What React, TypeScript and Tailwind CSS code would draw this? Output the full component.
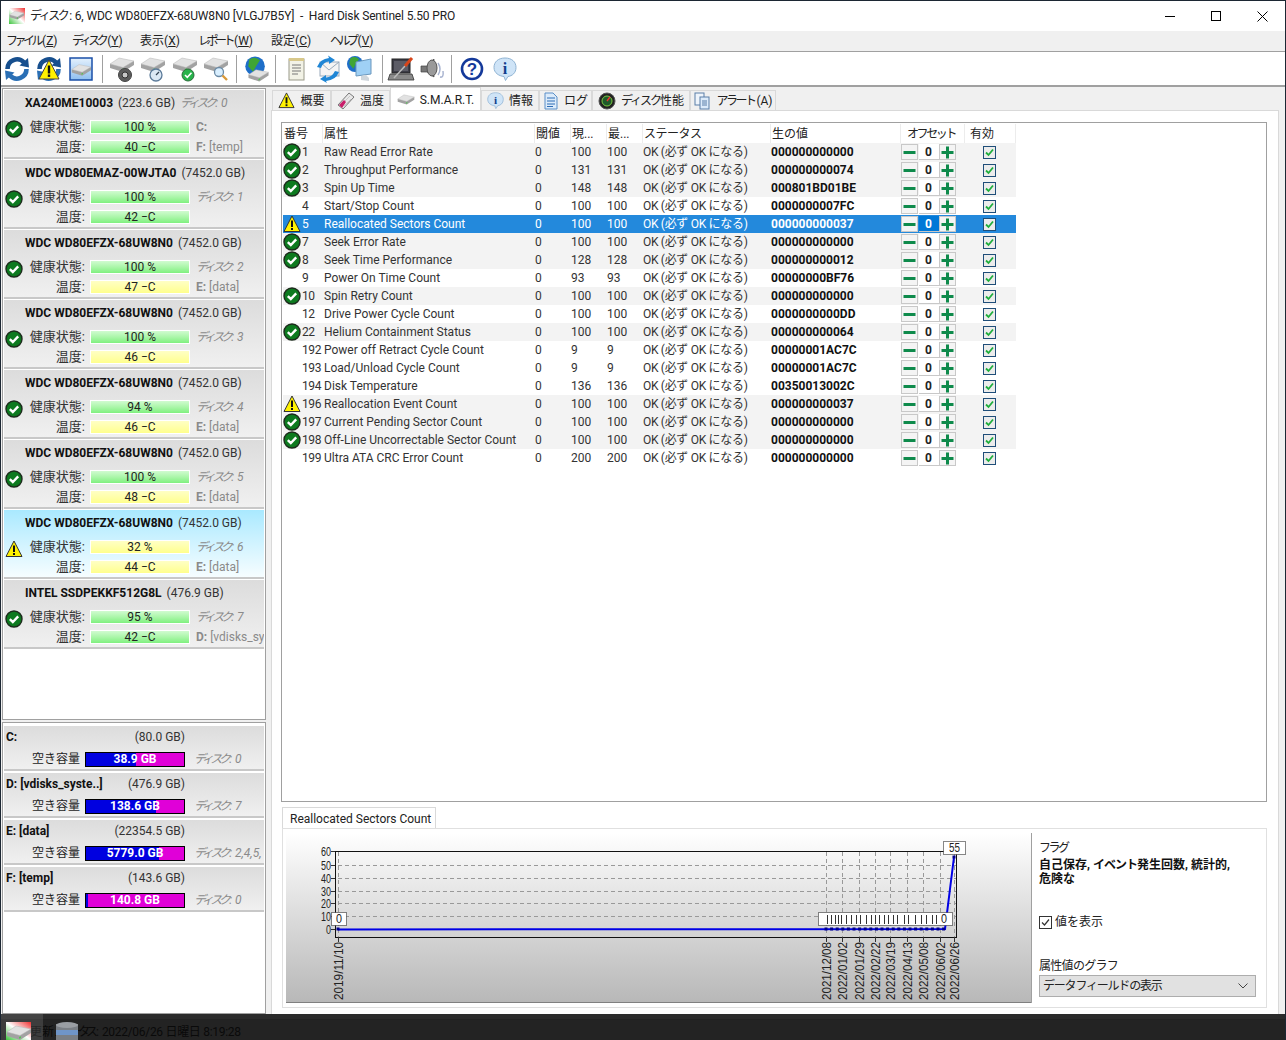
import React from 'react';

const FONT = 'Roboto, "Noto Sans CJK JP", sans-serif';

// --- small icons ---
function CheckIcon({ size = 18 }: { size?: number }) {
  return (
    <svg width={size} height={size} viewBox="0 0 18 18" className="shrink-0">
      <circle cx="9" cy="9" r="8" fill="#0d7a1f" stroke="#1c2b1c" strokeWidth="1.4" />
      <path d="M4.8 9.2 L7.8 12 L13.2 6.4" fill="none" stroke="#fff" strokeWidth="2.4" />
    </svg>
  );
}

function WarnIcon({ size = 18 }: { size?: number }) {
  return (
    <svg width={size} height={size} viewBox="0 0 18 18" className="shrink-0">
      <path d="M9 1 L17 16.5 L1 16.5 Z" fill="#fff200" stroke="#333" strokeWidth="1" strokeLinejoin="round" />
      <rect x="8" y="5.5" width="2" height="6.5" fill="#111" />
      <rect x="8" y="13" width="2" height="2" fill="#111" />
    </svg>
  );
}

function Disk({ x = 0, y = 0, s = 1 }: { x?: number; y?: number; s?: number }) {
  return (
    <g transform={`translate(${x} ${y}) scale(${s})`}>
      <path d="M1 8 L1 12 L14 16 L25 9 L25 5 Z" fill="#a2a2a2" />
      <path d="M1 8 L10 2 L25 5 L14 11.5 Z" fill="#e2e2e2" stroke="#b4b4b4" strokeWidth="0.5" />
      <path d="M13 13 L15 12.2 L15 14 L13 14.8 Z" fill="#55c455" />
    </g>
  );
}

function Refresh({ warn }: { warn?: boolean }) {
  return (
    <svg width="26" height="26" viewBox="0 0 26 26">
      <path d="M3.5 13 A9.5 9.5 0 0 1 20 6.5" fill="none" stroke="#174f8e" strokeWidth="4.6" />
      <path d="M22.5 13 A9.5 9.5 0 0 1 6 19.5" fill="none" stroke="#2a6fb5" strokeWidth="4.6" />
      <path d="M15.5 9.5 L25 11.5 L24 2 Z" fill="#174f8e" />
      <path d="M10.5 16.5 L1 14.5 L2 24 Z" fill="#2a6fb5" />
      {warn && (
        <g>
          <path d="M13 4 L23 23 L3 23 Z" fill="#fff200" stroke="#444" strokeWidth="1" />
          <rect x="11.8" y="9.5" width="2.4" height="8" fill="#111" />
          <rect x="11.8" y="18.5" width="2.4" height="2.4" fill="#111" />
        </g>
      )}
    </svg>
  );
}

function DiskBox() {
  return (
    <svg width="24" height="26" viewBox="0 0 24 26">
      <defs>
        <linearGradient id="dbox" x1="0" y1="0" x2="0" y2="1">
          <stop offset="0" stopColor="#e4f1fd" />
          <stop offset="1" stopColor="#8fbff0" />
        </linearGradient>
      </defs>
      <rect x="1" y="2" width="22" height="22" fill="url(#dbox)" stroke="#1a4fa8" strokeWidth="1.5" />
      <Disk x={2} y={7} s={0.8} />
    </svg>
  );
}

function DiskTool({ kind }: { kind: 'cd' | 'gauge' | 'ok' | 'search' }) {
  return (
    <svg width="28" height="28" viewBox="0 0 28 28">
      <Disk x={1} y={1} />
      {kind === 'cd' && (
        <g>
          <circle cx="17" cy="20" r="6.5" fill="#5c5c5c" stroke="#444" />
          <circle cx="17" cy="20" r="3" fill="#c8c8c8" stroke="#333" />
        </g>
      )}
      {kind === 'gauge' && (
        <g>
          <circle cx="17" cy="20" r="6" fill="#dbe8f5" stroke="#5b7a99" strokeWidth="1.3" />
          <path d="M17 20 L20 17" stroke="#345" strokeWidth="1.2" />
        </g>
      )}
      {kind === 'ok' && (
        <g>
          <circle cx="17" cy="20" r="6" fill="#27b34a" stroke="#2b6b3a" />
          <path d="M14 20 L16.3 22.3 L20.5 17.8" fill="none" stroke="#fff" strokeWidth="1.6" />
        </g>
      )}
      {kind === 'search' && (
        <g>
          <circle cx="17" cy="17" r="4.5" fill="#d9efff" stroke="#6b8aa5" strokeWidth="1.3" />
          <path d="M20.5 20.5 L25 25" stroke="#d99a3a" strokeWidth="2.4" />
        </g>
      )}
    </svg>
  );
}

function Globe({ cx = 12, cy = 12, r = 10 }: { cx?: number; cy?: number; r?: number }) {
  return (
    <g>
      <circle cx={cx} cy={cy} r={r} fill="#1e6ec8" />
      <path
        d={`M${cx - r * 0.6} ${cy - r * 0.7} Q${cx} ${cy - r * 1.1} ${cx + r * 0.5} ${cy - r * 0.6} L${cx + r * 0.1} ${cy} L${cx - r * 0.2} ${cy + r * 0.6} L${cx - r * 0.7} ${cy} Z`}
        fill="#3fa535"
      />
    </g>
  );
}

function GlobeDisk() {
  return (
    <svg width="28" height="28" viewBox="0 0 28 28">
      <Globe cx={13} cy={11} r={10.5} />
      <Disk x={5} y={13} s={0.9} />
    </svg>
  );
}

function NoteIcon() {
  return (
    <svg width="22" height="26" viewBox="0 0 22 26">
      <rect x="3" y="3" width="15" height="21" fill="#f2f2e6" stroke="#9a9a8a" />
      <rect x="3" y="2" width="15" height="3" fill="#d8c88a" />
      <path d="M6 9 H15 M6 12 H15 M6 15 H15 M6 18 H12" stroke="#777" strokeWidth="1" />
    </svg>
  );
}

function MailIcon() {
  return (
    <svg width="28" height="28" viewBox="0 0 28 28">
      <rect x="6" y="7" width="19" height="14" fill="#f4f4f4" stroke="#9ab" />
      <path d="M6 7 L15 15 L25 7" fill="none" stroke="#9ab" />
      <path d="M3 12 Q6 4 15 3 L14 0.5 L21 5 L15 9 L15 6.5 Q9 7 7 13 Z" fill="#1f86d6" />
      <path d="M25 17 Q22 25 12 26 L13 28 L6 24 L12 20 L12 22.5 Q18 22 21 16 Z" fill="#1f86d6" />
    </svg>
  );
}

function GlobeMonitor() {
  return (
    <svg width="28" height="28" viewBox="0 0 28 28">
      <Globe cx={9} cy={9} r={8} />
      <path d="M10 7 L25 4 L25 19 L10 21 Z" fill="#9fd0f5" stroke="#6a97bd" />
      <path d="M15 21 L15 25 L23 26 L23 23 L20 20 Z" fill="#cfd6dc" />
    </svg>
  );
}

function LaptopTool() {
  return (
    <svg width="30" height="28" viewBox="0 0 30 28">
      <rect x="5" y="4" width="18" height="14" fill="#3c3c46" stroke="#222" />
      <rect x="7" y="6" width="14" height="10" fill="#5c5c66" />
      <path d="M3 19 H25 L27 25 H1 Z" fill="#8a8a8a" stroke="#333" strokeWidth="0.8" />
      <path d="M7 23 L18 11" stroke="#bbb" strokeWidth="1.5" />
      <path d="M18 11 L25 3" stroke="#d8451a" strokeWidth="3" />
    </svg>
  );
}

function Speaker() {
  return (
    <svg width="26" height="26" viewBox="0 0 26 26">
      <path d="M2 10 L8 10 L15 3 L15 21 L8 16 L2 16 Z" fill="#777" stroke="#444" strokeWidth="0.7" />
      <ellipse cx="13" cy="12" rx="5" ry="8" fill="#9a9a9a" stroke="#555" />
      <path d="M19 7 Q23 13 19 19 M21 21 Q25 22 24 15" fill="none" stroke="#a9b4d0" strokeWidth="1.5" />
    </svg>
  );
}

function HelpIcon() {
  return (
    <svg width="24" height="24" viewBox="0 0 24 24">
      <circle cx="12" cy="12" r="10" fill="#fff" stroke="#14399a" strokeWidth="2.6" />
      <text x="12" y="18" textAnchor="middle" fontSize="17" fontWeight="700" fill="#14399a" fontFamily="Liberation Sans">?</text>
    </svg>
  );
}

function InfoBubble({ size = 24 }: { size?: number }) {
  return (
    <svg width={size} height={size} viewBox="0 0 24 24" className="shrink-0">
      <path d="M12 1 C19 1 23 5 23 10.5 C23 16 19 19 15 19.5 L12.5 23.5 L11 19.5 C6 19 1 16 1 10.5 C1 5 5 1 12 1 Z" fill="#cfe4f7" stroke="#8fb3d3" />
      <text x="12" y="17" textAnchor="middle" fontSize="16" fontWeight="700" fill="#12408c" fontFamily="Liberation Serif">i</text>
    </svg>
  );
}

function ThermoIcon() {
  return (
    <svg width="18" height="18" viewBox="0 0 18 18" className="shrink-0">
      <path d="M12 1 L17 5 L6 17 L1 13 Z" fill="#e8e8e8" stroke="#777" />
      <path d="M4 13 L13 4 M7 14 L14 7" stroke="#c8c8c8" />
      <path d="M2 13 L7 8 L9 10 L5 16 Z" fill="#c81e6a" />
    </svg>
  );
}

function DocIcon() {
  return (
    <svg width="16" height="18" viewBox="0 0 16 18" className="shrink-0">
      <path d="M2 1 H10 L14 5 V17 H2 Z" fill="#dcebfa" stroke="#5a8fc8" />
      <path d="M4 6 H12 M4 9 H12 M4 12 H12 M4 14.5 H10" stroke="#2d6cb5" />
    </svg>
  );
}

function GaugeIcon() {
  return (
    <svg width="18" height="18" viewBox="0 0 18 18" className="shrink-0">
      <circle cx="9" cy="9" r="8" fill="#222" stroke="#555" />
      <circle cx="9" cy="9" r="5" fill="#1f5a2a" stroke="#7ac943" />
      <path d="M9 9 L12 5" stroke="#e33" strokeWidth="1.4" />
    </svg>
  );
}

function CopyIcon() {
  return (
    <svg width="18" height="18" viewBox="0 0 18 18" className="shrink-0">
      <rect x="2" y="1" width="9" height="12" fill="#eef4fb" stroke="#5a7fa8" />
      <rect x="7" y="5" width="9" height="12" fill="#dcebfa" stroke="#5a7fa8" />
      <path d="M9 9 H14 M9 11 H14 M9 13 H14" stroke="#5a7fa8" />
    </svg>
  );
}

function SmallDisk() {
  return (
    <svg width="18" height="12" viewBox="0 0 26 16" className="shrink-0">
      <Disk />
    </svg>
  );
}

function AppIcon() {
  return (
    <svg width="16" height="16" viewBox="0 0 16 16" className="shrink-0">
      <defs>
        <linearGradient id="appbg" x1="0" y1="1" x2="1" y2="0">
          <stop offset="0" stopColor="#3ec43e" />
          <stop offset="0.5" stopColor="#ffffff" />
          <stop offset="1" stopColor="#f03030" />
        </linearGradient>
      </defs>
      <rect width="16" height="16" fill="url(#appbg)" />
      <g transform="translate(0 2) scale(0.6)">
        <Disk />
      </g>
    </svg>
  );
}

// katakana in the reference font runs much narrower than in the CJK fallback
function Kana({ children }: { children: React.ReactNode }) {
  return <span className="tracking-[-3.5px] pr-[2px]">{children}</span>;
}

// --- left column ---
type DiskInfo = {
  name: string;
  size: string;
  no: number;
  health: number;
  temp: number;
  tempWarn: boolean;
  vols: string[];
  warn?: boolean;
};

const disks: DiskInfo[] = [
  { name: 'XA240ME10003', size: '(223.6 GB)', no: 0, health: 100, temp: 40, tempWarn: false, vols: ['C:', 'F:|[temp]'] },
  { name: 'WDC WD80EMAZ-00WJTA0', size: '(7452.0 GB)', no: 1, health: 100, temp: 42, tempWarn: false, vols: [] },
  { name: 'WDC WD80EFZX-68UW8N0', size: '(7452.0 GB)', no: 2, health: 100, temp: 47, tempWarn: true, vols: ['E:|[data]'] },
  { name: 'WDC WD80EFZX-68UW8N0', size: '(7452.0 GB)', no: 3, health: 100, temp: 46, tempWarn: true, vols: [] },
  { name: 'WDC WD80EFZX-68UW8N0', size: '(7452.0 GB)', no: 4, health: 94, temp: 46, tempWarn: true, vols: ['E:|[data]'] },
  { name: 'WDC WD80EFZX-68UW8N0', size: '(7452.0 GB)', no: 5, health: 100, temp: 48, tempWarn: true, vols: ['E:|[data]'] },
  { name: 'WDC WD80EFZX-68UW8N0', size: '(7452.0 GB)', no: 6, health: 32, temp: 44, tempWarn: true, vols: ['E:|[data]'], warn: true },
  { name: 'INTEL SSDPEKKF512G8L', size: '(476.9 GB)', no: 7, health: 95, temp: 42, tempWarn: false, vols: ['D:|[vdisks_sy'] },
];

function Bar({ text, warn }: { text: string; warn: boolean }) {
  return (
    <div
      className={`w-[100px] h-[14px] shrink-0 border border-white flex items-center justify-center text-[12px] leading-none text-[#222] bg-gradient-to-b ${
        warn ? 'from-[#ffffc4] to-[#ffff8c]' : 'from-[#d0fbd0] to-[#7ff07f]'
      }`}
    >
      {text}
    </div>
  );
}

function VolLabel({ v }: { v: string }) {
  const [a, b] = v.split('|');
  return (
    <span className="text-[#8a8a8a] whitespace-nowrap">
      <b>{a}</b>
      {b ? ` ${b}` : ''}
    </span>
  );
}

function DiskNo({ children }: { children: React.ReactNode }) {
  return (
    <span className="italic text-[#8a8a8a] whitespace-nowrap">
      <Kana>ディスク</Kana>: {children}
    </span>
  );
}

function DiskCard({ d }: { d: DiskInfo }) {
  const first = d.no === 0;
  return (
    <div
      className={`h-[69px] mb-px shrink-0 overflow-hidden border-b-2 border-[#c8c8c8] bg-gradient-to-b ${
        d.warn ? 'from-[#a9e9ff] to-[#f6fdff]' : 'from-[#dcdcdc] to-[#f0f0f0]'
      }`}
    >
      <div className="h-[24px] pt-px pl-[21px] flex items-center gap-[5px] whitespace-nowrap">
        <span className="font-bold text-[#111]">{d.name}</span>
        <span className="text-[#333]">{d.size}</span>
        {first && <DiskNo>0</DiskNo>}
      </div>
      <div className="flex">
        <div className="w-[22px] pl-px pt-[6px] shrink-0">{d.warn ? <WarnIcon /> : <CheckIcon />}</div>
        <div className="flex-1 min-w-0 flex flex-col gap-[6px] pt-[6px]">
          <div className="flex items-center h-[14px]">
            <span className="w-[59px] text-right text-[#333] text-[13px] shrink-0 whitespace-nowrap">健康状態:</span>
            <div className="w-[5px] shrink-0" />
            <Bar text={`${d.health} %`} warn={!!d.warn} />
            <span className="ml-[6px]">{first ? <VolLabel v="C:" /> : <DiskNo>{d.no}</DiskNo>}</span>
          </div>
          <div className="flex items-center h-[14px]">
            <span className="w-[59px] text-right text-[#333] text-[13px] shrink-0">温度:</span>
            <div className="w-[5px] shrink-0" />
            <Bar text={`${d.temp} −C`} warn={d.tempWarn} />
            <span className="ml-[6px]">
              {first ? <VolLabel v={d.vols[1]} /> : d.vols[0] ? <VolLabel v={d.vols[0]} /> : null}
            </span>
          </div>
        </div>
      </div>
    </div>
  );
}

const volumes = [
  { name: 'C:', total: '(80.0 GB)', free: '38.9 GB', used: 51, disk: '0' },
  { name: 'D: [vdisks_syste..]', total: '(476.9 GB)', free: '138.6 GB', used: 71, disk: '7' },
  { name: 'E: [data]', total: '(22354.5 GB)', free: '5779.0 GB', used: 74, disk: '2,4,5,' },
  { name: 'F: [temp]', total: '(143.6 GB)', free: '140.8 GB', used: 2, disk: '0' },
];

function VolumeCard({ v }: { v: (typeof volumes)[number] }) {
  return (
    <div className="h-[45px] mb-[2px] border-b-2 border-[#c8c8c8] bg-gradient-to-b from-[#dcdcdc] to-[#f0f0f0] overflow-hidden">
      <div className="h-[22px] flex items-center w-[181px] pl-[2px] justify-between whitespace-nowrap">
        <span className="font-bold text-[#111]">{v.name}</span>
        <span className="text-[#333]">{v.total}</span>
      </div>
      <div className="flex items-center mt-[3px]">
        <span className="w-[76px] text-right text-[#222] shrink-0">空き容量</span>
        <div className="relative ml-[5px] w-[100px] h-[15px] border border-black bg-[#e000d8] shrink-0 overflow-hidden">
          <div className="h-full bg-[#0000e0]" style={{ width: `${v.used}%` }} />
          <span className="absolute inset-0 flex items-center justify-center text-white font-bold leading-none">{v.free}</span>
        </div>
        <span className="ml-[9px]">
          <DiskNo>{v.disk}</DiskNo>
        </span>
      </div>
    </div>
  );
}

// --- S.M.A.R.T. table ---
type Attr = [string, string, string, number, number, string, 'ok' | 'warn' | null];

const rows: Attr[] = [
  ['1', 'Raw Read Error Rate', '0', 100, 100, '000000000000', 'ok'],
  ['2', 'Throughput Performance', '0', 131, 131, '000000000074', 'ok'],
  ['3', 'Spin Up Time', '0', 148, 148, '000801BD01BE', 'ok'],
  ['4', 'Start/Stop Count', '0', 100, 100, '0000000007FC', null],
  ['5', 'Reallocated Sectors Count', '0', 100, 100, '000000000037', 'warn'],
  ['7', 'Seek Error Rate', '0', 100, 100, '000000000000', 'ok'],
  ['8', 'Seek Time Performance', '0', 128, 128, '000000000012', 'ok'],
  ['9', 'Power On Time Count', '0', 93, 93, '00000000BF76', null],
  ['10', 'Spin Retry Count', '0', 100, 100, '000000000000', 'ok'],
  ['12', 'Drive Power Cycle Count', '0', 100, 100, '0000000000DD', null],
  ['22', 'Helium Containment Status', '0', 100, 100, '000000000064', 'ok'],
  ['192', 'Power off Retract Cycle Count', '0', 9, 9, '00000001AC7C', null],
  ['193', 'Load/Unload Cycle Count', '0', 9, 9, '00000001AC7C', null],
  ['194', 'Disk Temperature', '0', 136, 136, '00350013002C', null],
  ['196', 'Reallocation Event Count', '0', 100, 100, '000000000037', 'warn'],
  ['197', 'Current Pending Sector Count', '0', 100, 100, '000000000000', 'ok'],
  ['198', 'Off-Line Uncorrectable Sector Count', '0', 100, 100, '000000000000', 'ok'],
  ['199', 'Ultra ATA CRC Error Count', '0', 200, 200, '000000000000', null],
];

const COLS = 'grid grid-cols-[40px_212px_36px_36px_36px_128px_130px_64px_51px]';

function StepButton({ plus }: { plus?: boolean }) {
  return (
    <div className="w-[17px] h-[16px] bg-[#f4f4f4] border border-[#c8c8c8] flex items-center justify-center shrink-0">
      <svg width="13" height="13" viewBox="0 0 13 13">
        <rect x="0.5" y="5" width="12" height="3" fill="#0e8a4b" />
        {plus && <rect x="5" y="0.5" width="3" height="12" fill="#0e8a4b" />}
      </svg>
    </div>
  );
}

function CheckBox() {
  return (
    <div className="w-[13px] h-[13px] border border-[#1f4e79] bg-[#ececec] flex items-center justify-center">
      <svg width="11" height="11" viewBox="0 0 11 11">
        <path d="M2 5.5 L4.5 8 L9 2.5" fill="none" stroke="#1fae3c" strokeWidth="1.8" />
      </svg>
    </div>
  );
}

function Row({ r, selected }: { r: Attr; selected: boolean }) {
  const [no, attr, thr, cur, worst, raw, icon] = r;
  const bg = selected ? 'bg-[#2389dc] text-white' : icon ? 'bg-[#f3f3f3] text-[#333]' : 'bg-white text-[#333]';
  return (
    <div className={`${COLS} h-[18px] items-center whitespace-nowrap ${bg}`}>
      <div className="flex items-center h-[18px]">
        <div className="w-[19px] shrink-0">{icon === 'ok' ? <CheckIcon /> : icon === 'warn' ? <WarnIcon /> : null}</div>
        <span className="tracking-[-0.4px]">{no}</span>
      </div>
      <span className="pl-px">{attr}</span>
      <span>{thr}</span>
      <span>{cur}</span>
      <span>{worst}</span>
      <span className="tracking-[-0.3px]">OK (必ず OK になる)</span>
      <span className={`font-bold ${selected ? 'text-white' : 'text-[#111]'}`}>{raw}</span>
      <div className="flex items-center justify-between w-[55px]">
        <StepButton />
        <div
          className={`w-[20px] h-[16px] flex items-center justify-center font-bold border-b border-[#c8c8c8] ${
            selected ? 'bg-[#0078d7] text-white' : 'bg-white text-[#222]'
          }`}
        >
          0
        </div>
        <StepButton plus />
      </div>
      <div className="flex justify-center pr-[3px]">
        <CheckBox />
      </div>
    </div>
  );
}

function SmartTable() {
  const cell = 'h-full flex items-center border-r border-[#ececec]';
  return (
    <div className="w-[733px] pt-px">
      <div className={`${COLS} h-[19px] items-center bg-white text-[#222] whitespace-nowrap`}>
        <div className={`${cell} pl-px`}>番号</div>
        <div className={`${cell} pl-px`}>属性</div>
        <div className={`${cell} pl-px`}>閾値</div>
        <div className={`${cell} pl-px`}>現...</div>
        <div className={`${cell} pl-px`}>最...</div>
        <div className={`${cell} pl-px`}>
          <span className="tracking-[-0.5px]">ステータス</span>
        </div>
        <div className={`${cell} pl-px`}>生の値</div>
        <div className={`${cell} pl-[6px]`}>
          <span className="tracking-[-2.4px]">オフセット</span>
        </div>
        <div className={`${cell} pl-[5px]`}>有効</div>
      </div>
      {rows.map((r) => (
        <Row key={r[0]} r={r} selected={r[0] === '5'} />
      ))}
    </div>
  );
}

// --- chart ---
const yTicks: [string, number][] = [
  ['60', 851],
  ['50', 865],
  ['40', 878],
  ['30', 891],
  ['20', 903],
  ['10', 916],
  ['0', 929],
];
const xTicks: [string, number][] = [
  ['2019/11/10', 338],
  ['2021/12/08', 826],
  ['2022/01/02', 842],
  ['2022/01/29', 859],
  ['2022/02/22', 875],
  ['2022/03/19', 890],
  ['2022/04/13', 907],
  ['2022/05/08', 923],
  ['2022/06/02', 940],
  ['2022/06/26', 954],
];
const dotXs = Array.from({ length: 22 }, (_, i) => 826 + i * 5.6);
const barXs = [827, 831, 835, 838, 841, 846, 851, 856, 860, 866, 871, 875, 879, 884, 888, 893, 897, 904, 908, 915, 921, 926, 932, 936];

function Chart() {
  const label = { fontFamily: '"Liberation Sans", sans-serif', fill: '#222' };
  return (
    <svg viewBox="286 833 745 170" width="745" height="170" className="block">
      <rect x="335.5" y="851.5" width="621" height="86" fill="none" stroke="#111" />
      {yTicks.slice(1, -1).map(([, y]) => (
        <line key={y} x1="338" x2="956" y1={y + 0.5} y2={y + 0.5} stroke="#999" strokeDasharray="4 3" />
      ))}
      {xTicks.map(([, x]) => (
        <line key={x} x1={x + 0.5} x2={x + 0.5} y1="852" y2="937" stroke="#999" strokeDasharray="4 3" />
      ))}
      {xTicks.map(([, x]) => (
        <line key={`t${x}`} x1={x + 0.5} x2={x + 0.5} y1="937" y2="942" stroke="#333" />
      ))}
      {yTicks.map(([t, y]) => (
        <g key={t}>
          <line x1="331" x2="335" y1={y + 0.5} y2={y + 0.5} stroke="#333" />
          <text x="331" y={y + 4.5} textAnchor="end" fontSize="12" style={label} textLength={t.length * 5} lengthAdjust="spacingAndGlyphs">
            {t}
          </text>
        </g>
      ))}
      {xTicks.map(([t, x]) => (
        <text
          key={t}
          transform={`translate(${x + 4.5} 1000) rotate(-90)`}
          fontSize="12"
          style={label}
          textLength="58"
          lengthAdjust="spacingAndGlyphs"
        >
          {t}
        </text>
      ))}
      <polyline points="338,929.5 945,929 954,857" fill="none" stroke="#0000e6" strokeWidth="2" />
      {dotXs.map((x) => (
        <rect key={x} x={x - 1.5} y="927.5" width="3" height="3" fill="#00008c" />
      ))}
      <rect x="336.5" y="927.5" width="3" height="3" fill="#00008c" />
      <rect x="952.5" y="855.5" width="3" height="3" fill="#00008c" />

      <rect x="331.5" y="912.5" width="15" height="13" fill="#fff" stroke="#111" strokeDasharray="1 1" />
      <text x="339" y="923" textAnchor="middle" fontSize="12" style={label} textLength="6" lengthAdjust="spacingAndGlyphs">0</text>
      <rect x="818.5" y="912.5" width="134" height="13" fill="#fff" stroke="#111" strokeDasharray="1 1" />
      {barXs.map((x) => (
        <line key={x} x1={x + 0.5} x2={x + 0.5} y1="915" y2="924" stroke="#333" />
      ))}
      <text x="944" y="923" textAnchor="middle" fontSize="12" style={label} textLength="6" lengthAdjust="spacingAndGlyphs">0</text>
      <rect x="943.5" y="841.5" width="22" height="13" fill="#fff" stroke="#111" strokeDasharray="1 1" />
      <text x="954.5" y="852" textAnchor="middle" fontSize="12" style={label} textLength="11" lengthAdjust="spacingAndGlyphs">55</text>
    </svg>
  );
}

// --- top tabs ---
const tabs: { key: string; label: React.ReactNode; icon: React.ReactNode; w: string; active?: boolean }[] = [
  { key: 'a', label: '概要', icon: <WarnIcon size={17} />, w: 'w-[59px]' },
  { key: 'b', label: '温度', icon: <ThermoIcon />, w: 'w-[59px]' },
  { key: 'c', label: 'S.M.A.R.T.', icon: <SmallDisk />, w: 'w-[91px]', active: true },
  { key: 'd', label: '情報', icon: <InfoBubble size={17} />, w: 'w-[58px]' },
  { key: 'e', label: 'ログ', icon: <DocIcon />, w: 'w-[53px]' },
  { key: 'f', label: <><span className="tracking-[-2px]">ディスク</span>性能</>, icon: <GaugeIcon />, w: 'w-[98px]' },
  { key: 'g', label: <><span className="tracking-[-2.5px] pr-[2px]">アラート</span>(A)</>, icon: <CopyIcon />, w: 'w-[86px]' },
];

const menus: [string, string, string, boolean][] = [
  ['ファイル', 'Z', 'w-[66px]', true],
  ['ディスク', 'Y', 'w-[68px]', true],
  ['表示', 'X', 'w-[58px]', false],
  ['レポート', 'W', 'w-[73px]', true],
  ['設定', 'C', 'w-[59px]', false],
  ['ヘルプ', 'V', 'w-[60px]', true],
];

function Sep({ className = 'mx-[6px]' }: { className?: string }) {
  return <div className={`w-px h-[28px] bg-[#a0a0a0] shrink-0 ${className}`} />;
}

export default function App() {
  return (
    <div
      className="relative w-[1286px] h-[1040px] overflow-hidden bg-[#f0f0f0] text-[12px] leading-[16px] flex flex-col border-x border-t border-[#1c2733]"
      style={{ fontFamily: FONT }}
    >
      {/* title bar */}
      <div className="h-[30px] shrink-0 bg-white flex items-center pl-[8px] text-[#222]">
        <AppIcon />
        <span className="ml-[5px] whitespace-nowrap tracking-[-0.15px]">
          <span className="tracking-[-2.5px] pr-[2px]">ディスク</span>: 6, WDC WD80EFZX-68UW8N0 [VLGJ7B5Y]&nbsp;&nbsp;-&nbsp;&nbsp;Hard Disk Sentinel 5.50 PRO
        </span>
        <div className="ml-auto flex items-center text-black">
          <div className="w-[46px] flex justify-center">
            <div className="w-[10px] h-px bg-black" />
          </div>
          <div className="w-[46px] flex justify-center">
            <div className="w-[10px] h-[10px] border border-black" />
          </div>
          <div className="w-[46px] flex justify-center">
            <svg width="11" height="11" viewBox="0 0 11 11">
              <path d="M0.5 0.5 L10.5 10.5 M10.5 0.5 L0.5 10.5" stroke="#000" />
            </svg>
          </div>
        </div>
      </div>

      {/* menu */}
      <div className="h-[21px] shrink-0 flex items-center pl-[5px] border-b border-[#a0a0a0] text-[#222]">
        {menus.map(([m, k, w, kana]) => (
          <span key={k} className={`${w} whitespace-nowrap`}>
            {kana ? <Kana>{m}</Kana> : m}(<span className="underline">{k}</span>)
          </span>
        ))}
      </div>

      {/* toolbar */}
      <div className="h-[35px] shrink-0 bg-white border-b-2 border-[#a0a0a0] flex items-center">
        <div className="w-[32px] flex justify-center"><Refresh /></div>
        <div className="w-[32px] flex justify-center"><Refresh warn /></div>
        <div className="w-[31px] flex justify-center"><DiskBox /></div>
        <Sep className="ml-[6px] mr-[3px]" />
        <div className="w-[31px] flex justify-center"><DiskTool kind="cd" /></div>
        <div className="w-[32px] flex justify-center"><DiskTool kind="gauge" /></div>
        <div className="w-[32px] flex justify-center"><DiskTool kind="ok" /></div>
        <div className="w-[29px] flex justify-center"><DiskTool kind="search" /></div>
        <Sep />
        <div className="w-[26px] flex justify-center"><GlobeDisk /></div>
        <Sep />
        <div className="w-[30px] flex justify-center"><NoteIcon /></div>
        <div className="w-[32px] flex justify-center"><MailIcon /></div>
        <div className="w-[32px] flex justify-center"><GlobeMonitor /></div>
        <Sep className="ml-[6px] mr-[3px]" />
        <div className="w-[32px] flex justify-center"><LaptopTool /></div>
        <div className="w-[27px] flex justify-center"><Speaker /></div>
        <Sep />
        <div className="w-[28px] flex justify-center"><HelpIcon /></div>
        <div className="w-[32px] flex justify-center ml-[3px]"><InfoBubble /></div>
      </div>

      {/* main */}
      <div className="flex-1 min-h-0 flex">
        {/* left column */}
        <div className="w-[265px] shrink-0 pl-px pt-px flex flex-col gap-[2px]">
          <div className="h-[632px] shrink-0 bg-white border border-[#a0a0a0] pt-px px-px overflow-hidden">
            {disks.map((d) => (
              <DiskCard key={d.no} d={d} />
            ))}
          </div>
          <div className="flex-1 min-h-0 bg-white border border-[#a0a0a0] pt-[3px] px-px overflow-hidden">
            {volumes.map((v) => (
              <VolumeCard key={v.name} v={v} />
            ))}
          </div>
        </div>

        {/* right column */}
        <div className="w-[1008px] ml-[5px] shrink-0 flex flex-col">
          <div className="h-[23px] shrink-0 flex items-end pl-px">
            {tabs.map((t) => (
              <div
                key={t.key}
                className={`${t.w} flex items-center justify-center gap-[5px] whitespace-nowrap text-[#222] border border-[#d9d9d9] ${
                  t.active ? 'h-[23px] bg-white border-b-0 relative' : 'h-[20px] border-b-0 bg-[#f0f0f0]'
                }`}
              >
                {t.icon}
                <span className="pt-px">{t.label}</span>
              </div>
            ))}
          </div>
          <div className="flex-1 min-h-0 bg-white border-t border-x border-[#d9d9d9] pl-[9px] pr-[11px] pt-[11px] flex flex-col">
            <div className="h-[680px] shrink-0 border border-[#a0a0a0] pl-px bg-white overflow-hidden">
              <SmartTable />
            </div>

            <div className="mt-[5px] flex flex-col pl-px">
              <div className="w-[154px] h-[22px] flex items-center pl-[7px] bg-white border-t border-x border-[#d9d9d9] text-[#222] whitespace-nowrap">
                Reallocated Sectors Count
              </div>
              <div className="h-[180px] border border-[#e0e0e0] -mt-px pl-[3px] pt-[4px] flex">
                <div className="w-[745px] h-[170px] shrink-0 bg-gradient-to-b from-white to-[#b8b8b8] border-b border-[#808080]">
                  <Chart />
                </div>
                <div className="flex-1 h-[170px] border-l border-[#a0a0a0] pl-[7px] pt-[7px] text-[#222] flex flex-col">
                  <span className="tracking-[-2.5px]">フラグ</span>
                  <span className="font-bold text-[#111] leading-[14px] mt-[2px] whitespace-nowrap">
                    自己保存, <span className="tracking-[-1px]">イベント</span>発生回数, 統計的,
                    <br />
                    危険な
                  </span>
                  <div className="flex items-center gap-[3px] mt-[28px]">
                    <div className="w-[13px] h-[13px] border border-[#333] bg-white flex items-center justify-center">
                      <svg width="11" height="11" viewBox="0 0 11 11">
                        <path d="M2 5.5 L4.5 8 L9 2.5" fill="none" stroke="#333" strokeWidth="1.2" />
                      </svg>
                    </div>
                    <span>値を表示</span>
                  </div>
                  <span className="mt-[28px] tracking-[-0.7px]">属性値のグラフ</span>
                  <div className="w-[217px] h-[22px] mt-px bg-[#e1e1e1] border border-[#adadad] flex items-center justify-between pl-[3px] pr-[7px]">
                    <span className="tracking-[-1.2px]">データフィールドの表示</span>
                    <svg width="10" height="6" viewBox="0 0 10 6">
                      <path d="M0.5 0.5 L5 5 L9.5 0.5" fill="none" stroke="#444" />
                    </svg>
                  </div>
                </div>
              </div>
            </div>
          </div>
        </div>
      </div>

      {/* status bar under the dark overlay */}
      <div className="relative h-[26px] shrink-0 bg-[#232323] border-t-[5px] border-[#2b2b2b] flex items-end pl-[5px] text-[#0a0a0a] text-[12px] whitespace-nowrap">
        <span>
          最終更新<span className="tracking-[-4px] pr-[2px]">ステータス</span>: <span className="tracking-[-0.3px]">2022/06/26 日曜日 8:19:28</span>
        </span>
        <div className="absolute left-0 -top-[5px] w-[42px] h-[26px] bg-[#ffffff1f]" />
        <div className="absolute left-[5px] top-[3px]">
          <svg width="25" height="18" viewBox="0 0 25 18">
            <defs>
              <linearGradient id="tb" x1="0" y1="1" x2="1" y2="0">
                <stop offset="0" stopColor="#3ec43e" />
                <stop offset="0.5" stopColor="#ffffff" />
                <stop offset="1" stopColor="#f03030" />
              </linearGradient>
            </defs>
            <rect width="25" height="18" fill="url(#tb)" />
            <g transform="translate(0 2)">
              <Disk />
            </g>
          </svg>
        </div>
        <div className="absolute left-[54px] top-[3px]">
          <svg width="24" height="18" viewBox="0 0 24 18">
            <rect x="1" y="2" width="22" height="16" fill="#7a7f85" />
            <rect x="1" y="8" width="22" height="5" fill="#6f95c8" />
            <ellipse cx="12" cy="3" rx="11" ry="3" fill="#9a9ea3" />
          </svg>
        </div>
      </div>
    </div>
  );
}
